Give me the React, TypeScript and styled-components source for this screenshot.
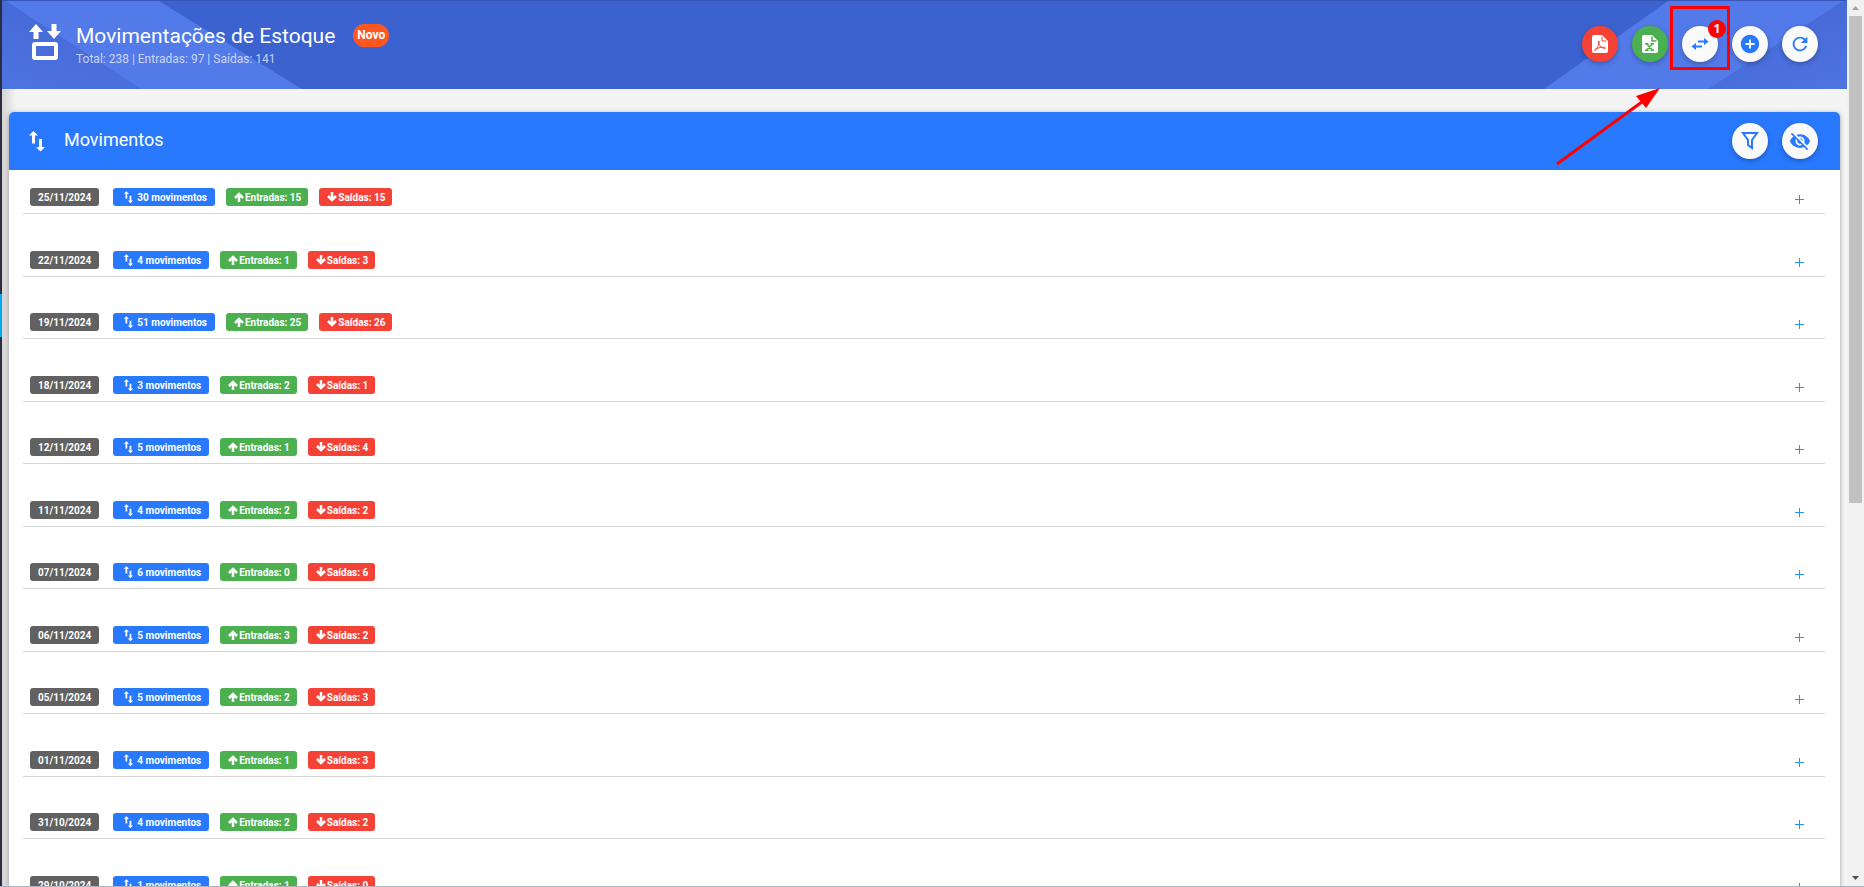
import React from 'react';
import styled, { createGlobalStyle } from 'styled-components';
import { MdAddCircle, MdRefresh, MdVisibilityOff } from 'react-icons/md';

const GlobalStyle = createGlobalStyle`
  * { box-sizing: border-box; }
  html, body, #root { height: 100%; }
  body {
    margin: 0;
    overflow: hidden;
    background: #f4f4f4;
    font-family: Roboto, "Liberation Sans", sans-serif;
    color: #fff;
  }
`;

const Frame = styled.div`
  display: flex;
  height: 100vh;
  overflow: hidden;
  border-bottom: 1px solid #a9b4bf;
`;

const Edge = styled.div`
  flex: none;
  width: 2px;
  background: linear-gradient(#2b2d42 294px, #03a9f4 294px, #03a9f4 337px, #2b2d42 337px);
`;

const Page = styled.div`
  flex: 1;
  min-width: 0;
  overflow: hidden;
  background: linear-gradient(90deg, #d4d4d4, #f4f4f4 14px);
`;

const Header = styled.header`
  position: relative;
  display: flex;
  align-items: center;
  justify-content: space-between;
  height: 89px;
  padding: 0 29px 2px 24px;
  background: #3c62d0;
  border-top: 1px solid #3556b4;
`;

const HeaderArt = styled.svg<{ $side: 'left' | 'right' }>`
  position: absolute;
  top: 0;
  ${p => p.$side}: 0;
  width: 304px;
  height: 88px;
`;

const Brand = styled.div`
  position: relative;
  display: flex;
  align-items: center;
  gap: 14px;
`;

const Titles = styled.div`
  display: flex;
  flex-direction: column;
  padding-top: 1px;
`;

const TitleLine = styled.div`
  display: flex;
  align-items: center;
  gap: 18px;
`;

const Title = styled.h1`
  margin: 0;
  font-size: 21px;
  font-weight: 400;
  line-height: 28px;
`;

const NewTag = styled.span`
  padding: 0 4px;
  border-radius: 12px;
  background: #ff5722;
  font-size: 12px;
  font-weight: 700;
  line-height: 23px;
`;

const Totals = styled.p`
  margin: 0;
  font-size: 12px;
  line-height: 18px;
  color: rgba(255, 255, 255, 0.7);
`;

const Actions = styled.div`
  position: relative;
  display: flex;
  gap: 14px;
`;

const RoundButton = styled.button<{ $tone?: string }>`
  position: relative;
  display: flex;
  align-items: center;
  justify-content: center;
  width: 36px;
  height: 36px;
  padding: 0;
  border: 0;
  border-radius: 50%;
  background: ${p => p.$tone ?? '#fafafa'};
  color: ${p => (p.$tone ? '#fff' : '#2979ff')};
  box-shadow: 0 2px 5px rgba(0, 0, 0, 0.26);
`;

const Count = styled.span`
  position: absolute;
  top: -6px;
  right: -8px;
  width: 18px;
  border-radius: 50%;
  background: #f00;
  color: #fff;
  font: 700 12px/18px "Open Sans", sans-serif;
  text-align: center;
`;

const Highlight = styled.span`
  position: absolute;
  inset: -20px -12px -8px -12px;
  border: 3px solid #f00;
  pointer-events: none;
`;

const Pointer = styled.svg`
  position: absolute;
  top: 60px;
  right: 56px;
  width: 108px;
  height: 82px;
  z-index: 2;
  pointer-events: none;
`;

const Card = styled.section`
  margin: 23px 7px 0;
  border-radius: 5px 5px 0 0;
  background: #fff;
  box-shadow: 0 1px 5px rgba(0, 0, 0, 0.35);
`;

const CardHeader = styled.div`
  display: flex;
  align-items: center;
  justify-content: space-between;
  height: 58px;
  padding: 0 22px 0 17px;
  border-radius: 5px 5px 0 0;
  background: #2979ff;
`;

const CardTitle = styled.h2`
  display: flex;
  align-items: center;
  gap: 14px;
  margin: 0;
  font-size: 18px;
  font-weight: 400;
  line-height: 24px;
`;

const CardName = styled.span`
  padding-bottom: 2px;
`;

const Days = styled.ul`
  margin: 0;
  padding: 0 15px 0 14px;
  list-style: none;
`;

const Day = styled.li`
  display: flex;
  align-items: flex-end;
  height: 63px;
  padding: 0 21px 7px 7px;
  border-bottom: 1px solid #d6d6d6;

  &:nth-child(odd) { height: 62px; }
  &:first-child { height: 44px; }
`;

const tones = { date: '#616161', moves: '#2979ff', entries: '#4caf50', exits: '#f44336' };
const badgePadding = { date: '0 8px', moves: '0 8px 0 9px', entries: '0 7px 0 8px', exits: '0 7px 0 8px' };

const Badge = styled.span<{ $tone: keyof typeof tones }>`
  display: flex;
  align-items: center;
  gap: 1px;
  height: 18px;
  margin-right: ${p => (p.$tone === 'date' ? 14 : 11)}px;
  padding: ${p => badgePadding[p.$tone]};
  border-radius: 3px;
  background: ${p => tones[p.$tone]};
  font-size: 10px;
  font-weight: 700;
  white-space: nowrap;
`;

const Expand = styled.button`
  display: flex;
  margin-left: auto;
  padding: 0 0 2px;
  border: 0;
  background: none;
  color: #2196f3;
`;

const Scrollbar = styled.div`
  flex: none;
  display: flex;
  flex-direction: column;
  align-items: center;
  width: 17px;
  background: #f1f1f1;
`;

const ScrollButton = styled.button`
  display: flex;
  align-items: center;
  justify-content: center;
  flex: none;
  width: 17px;
  height: 16px;
  padding: 0;
  border: 0;
  background: none;
`;

const Thumb = styled.div`
  flex: 0 0 55%;
  width: 13px;
  margin-bottom: auto;
  background: #c1c1c1;
`;

const StockIcon = () => (
  <svg width="36" height="40" viewBox="0 2 36 40" fill="#fff" aria-hidden="true">
    <path d="M10 2 17 10H12.500V17H7.500V10H3ZM25.500 2V9H21L28 17 35 9H30.500V2Z" />
    <rect x="8" y="22" width="22" height="14" rx="1" fill="none" stroke="#fff" strokeWidth="4" />
  </svg>
);

const UpDownIcon = ({ size }: { size: number }) => (
  <svg width={size} height={size} viewBox="0 0 24 24" fill="currentColor" aria-hidden="true">
    <path d="M7.500 2 12 6.500H9V14.500H6V6.500H3ZM13 10H16V18H19L14.500 22.500 10 18H13Z" />
  </svg>
);

const ArrowIcon = ({ down = false }: { down?: boolean }) => (
  <svg width="10" height="10" viewBox="0 0 10 10" fill="none" stroke="currentColor" strokeWidth="2.500" aria-hidden="true">
    <path d={down ? 'M5 0V8M1 4 5 8 9 4' : 'M5 10V2M1 6 5 2 9 6'} />
  </svg>
);

const PdfIcon = () => (
  <svg width="18" height="20" viewBox="0 0 18 20" aria-hidden="true">
    <path fill="#fff" d="M3 1H11L17 7V17a2 2 0 0 1-2 2H3a2 2 0 0 1-2-2V3a2 2 0 0 1 2-2Z" />
    <path fill="none" stroke="#f44336" d="M11 2.500V7H15.500M4 16.500C6 14.500 8 11 8.300 8C8.400 6.800 7.300 6.800 7.400 8C7.700 11 10.500 14 13.500 14.500C15 14.500 14.500 13.200 13 13.200C9.500 13.200 6 14 4 15.500C3.300 16.100 3.500 17 4 16.500Z" />
  </svg>
);

const ExcelIcon = () => (
  <svg width="18" height="20" viewBox="0 0 18 20" aria-hidden="true">
    <path fill="#fff" d="M3 1H11L17 7V17a2 2 0 0 1-2 2H3a2 2 0 0 1-2-2V3a2 2 0 0 1 2-2Z" />
    <path fill="none" stroke="#4caf50" strokeWidth="1.500" d="M11 2.500V7H15.500" />
    <path fill="none" stroke="#4caf50" strokeWidth="1.500" d="M4 9.700H7.500M9.500 9.700H13M4 16.300H7.500M9.500 16.300H13M5.500 9.700 11.500 16.300M11.500 9.700 5.500 16.300" />
  </svg>
);

const SwapIcon = () => (
  <svg width="20" height="20" viewBox="0 0 20 20" fill="currentColor" aria-hidden="true">
    <path d="M14 4 18.500 7.500 14 11V8.500H8V6.500H14ZM6 9V11.500H12V13.500H6V16L1.500 12.500Z" />
  </svg>
);

const FilterIcon = () => (
  <svg width="20" height="20" viewBox="0 0 20 20" fill="none" stroke="currentColor" strokeWidth="2" aria-hidden="true">
    <path d="M3 2H17L12 9V17L8 14V9Z" />
  </svg>
);

const PlusIcon = () => (
  <svg width="9" height="9" viewBox="0 0 9 9" stroke="currentColor" aria-hidden="true">
    <path d="M0 4.500H9M4.500 0V9" />
  </svg>
);

const days: [string, number, number, number][] = [
  ['25/11/2024', 30, 15, 15],
  ['22/11/2024', 4, 1, 3],
  ['19/11/2024', 51, 25, 26],
  ['18/11/2024', 3, 2, 1],
  ['12/11/2024', 5, 1, 4],
  ['11/11/2024', 4, 2, 2],
  ['07/11/2024', 6, 0, 6],
  ['06/11/2024', 5, 3, 2],
  ['05/11/2024', 5, 2, 3],
  ['01/11/2024', 4, 1, 3],
  ['31/10/2024', 4, 2, 2],
  ['29/10/2024', 1, 1, 0],
];

const BandArt = ({ side }: { side: 'left' | 'right' }) => (
  <HeaderArt $side={side} viewBox="0 0 304 88" aria-hidden="true">
    <defs>
      <linearGradient id={side} x1="0" y1="1" x2="0.500" y2="0">
        <stop offset="0" stopColor="#4e74e2" />
        <stop offset="1" stopColor="#4468d4" />
      </linearGradient>
    </defs>
    <g transform={side === 'right' ? 'translate(304 0) scale(-1 1)' : undefined}>
      <path fill="#537ae9" d={side === 'left' ? 'M0 0H157L300 88H0Z' : 'M0 0H179L303 88H0Z'} />
      <path fill={`url(#${side})`} d="M0 0H4L139 88H0Z" />
    </g>
  </HeaderArt>
);

export default function App() {
  return (
    <>
      <GlobalStyle />
      <Frame>
        <Edge />
        <Page>
          <Header>
            <BandArt side="left" />
            <BandArt side="right" />
            <Brand>
              <StockIcon />
              <Titles>
                <TitleLine>
                  <Title>Movimentações de Estoque</Title>
                  <NewTag>Novo</NewTag>
                </TitleLine>
                <Totals>Total: 238 | Entradas: 97 | Saídas: 141</Totals>
              </Titles>
            </Brand>
            <Actions>
              <RoundButton $tone="#f44336" aria-label="Exportar PDF"><PdfIcon /></RoundButton>
              <RoundButton $tone="#4caf50" aria-label="Exportar Excel"><ExcelIcon /></RoundButton>
              <RoundButton aria-label="Transferências">
                <SwapIcon />
                <Count>1</Count>
                <Highlight />
                <Pointer viewBox="0 0 108 82">
                  <path d="M3 78 92 13" stroke="#f00" strokeWidth="3" />
                  <path d="M106 2 82 10 92 22Z" fill="#f00" />
                </Pointer>
              </RoundButton>
              <RoundButton aria-label="Adicionar"><MdAddCircle size={22} /></RoundButton>
              <RoundButton aria-label="Atualizar"><MdRefresh size={22} /></RoundButton>
            </Actions>
          </Header>
          <Card>
            <CardHeader>
              <CardTitle><UpDownIcon size={24} /><CardName>Movimentos</CardName></CardTitle>
              <Actions>
                <RoundButton aria-label="Filtrar"><FilterIcon /></RoundButton>
                <RoundButton aria-label="Ocultar"><MdVisibilityOff size={22} /></RoundButton>
              </Actions>
            </CardHeader>
            <Days>
              {days.map(([date, moves, entries, exits]) => (
                <Day key={date}>
                  <Badge $tone="date">{date}</Badge>
                  <Badge $tone="moves"><UpDownIcon size={14} />{moves} movimentos</Badge>
                  <Badge $tone="entries"><ArrowIcon />Entradas: {entries}</Badge>
                  <Badge $tone="exits"><ArrowIcon down />Saídas: {exits}</Badge>
                  <Expand aria-label={`Expandir ${date}`}><PlusIcon /></Expand>
                </Day>
              ))}
            </Days>
          </Card>
        </Page>
        <Scrollbar>
          <ScrollButton aria-label="Rolar para cima">
            <svg width="7" height="4"><path d="M0 4 3.500 0 7 4Z" fill="#a3a3a3" /></svg>
          </ScrollButton>
          <Thumb />
          <ScrollButton aria-label="Rolar para baixo">
            <svg width="7" height="4"><path d="M0 0 3.500 4 7 0Z" fill="#505050" /></svg>
          </ScrollButton>
        </Scrollbar>
      </Frame>
    </>
  );
}
